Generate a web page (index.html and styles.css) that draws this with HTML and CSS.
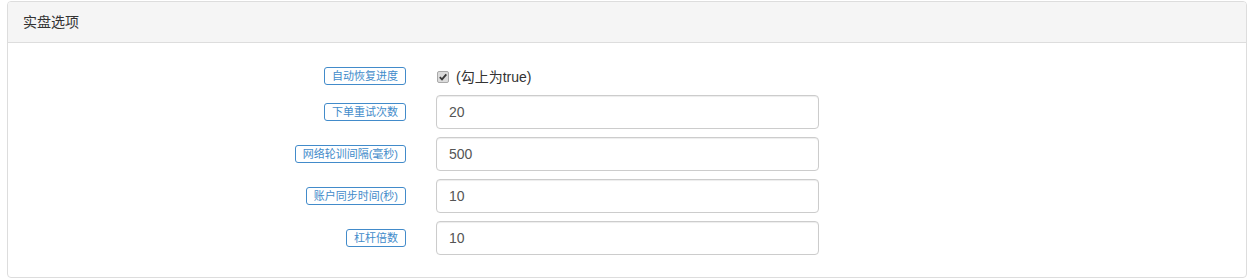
FILE: index.html
```html
<!DOCTYPE html>
<html lang="zh">
<head>
<meta charset="utf-8">
<title>实盘选项</title>
<link rel="stylesheet" href="styles.css">
</head>
<body>
<div class="panel">
  <div class="panel-heading">实盘选项</div>
  <div class="panel-body">
    <form class="form">
      <div class="row row-check">
        <div class="label-cell"><span class="tag">自动恢复进度</span></div>
        <label class="check">
          <span class="box"><svg width="12" height="12" viewBox="0 0 12 12"><rect x="0.5" y="0.5" width="11" height="11" rx="1.5" fill="#dcdcdc" stroke="#a9a9a9"/><path d="M2.8 6.2 L5 8.4 L9.3 3.4" fill="none" stroke="#3a3a3a" stroke-width="1.8"/></svg></span>
          <span class="check-text">(勾上为true)</span>
        </label>
      </div>
      <div class="row">
        <div class="label-cell"><span class="tag">下单重试次数</span></div>
        <input class="input" type="text" value="20">
      </div>
      <div class="row">
        <div class="label-cell"><span class="tag">网络轮训间隔(毫秒)</span></div>
        <input class="input" type="text" value="500">
      </div>
      <div class="row">
        <div class="label-cell"><span class="tag">账户同步时间(秒)</span></div>
        <input class="input" type="text" value="10">
      </div>
      <div class="row">
        <div class="label-cell"><span class="tag">杠杆倍数</span></div>
        <input class="input" type="text" value="10">
      </div>
    </form>
  </div>
</div>
</body>
</html>
```

FILE: styles.css
```css
html, body {
  margin: 0;
  padding: 0;
  background: #fff;
}
body {
  font-family: "Liberation Sans", "Noto Sans CJK SC", sans-serif;
  color: #333;
  font-size: 14px;
  line-height: 20px;
  padding-top: 1px;
}
.panel {
  margin: 0 2px 0 7px;
  border: 1px solid #ddd;
  border-radius: 4px;
  background: #fff;
}
.panel-heading {
  background: #f5f5f5;
  border-bottom: 1px solid #ddd;
  border-radius: 3px 3px 0 0;
  padding: 10px 15px;
  height: 20px;
  line-height: 20px;
  font-size: 14px;
  color: #333;
}
.panel-body {
  padding: 22px 0 22px 0;
}
.form {
  display: flex;
  flex-direction: column;
  gap: 8px;
}
.row {
  display: grid;
  grid-template-columns: 398px 383px;
  column-gap: 30px;
  align-items: center;
  height: 34px;
}
.row-check {
  height: 20px;
  margin-bottom: 2px;
}
.label-cell {
  display: flex;
  justify-content: flex-end;
}
.tag {
  display: inline-block;
  border: 1px solid #428bca;
  border-radius: 3px;
  padding: 0 7px;
  font-size: 11px;
  line-height: 16px;
  color: #428bca;
  white-space: nowrap;
}
.check {
  display: flex;
  align-items: center;
  gap: 7px;
  padding-left: 1px;
  margin-top: 2px;
}
.box {
  display: flex;
  width: 12px;
  height: 12px;
}
.check-text {
  font-size: 14px;
  color: #333;
}
.input {
  box-sizing: border-box;
  width: 383px;
  height: 34px;
  border: 1px solid #ccc;
  border-radius: 4px;
  padding: 6px 12px;
  font-family: "Liberation Sans", sans-serif;
  font-size: 14px;
  color: #555;
  background: #fff;
  box-shadow: inset 0 1px 1px rgba(0,0,0,0.075);
  outline: none;
}
```
